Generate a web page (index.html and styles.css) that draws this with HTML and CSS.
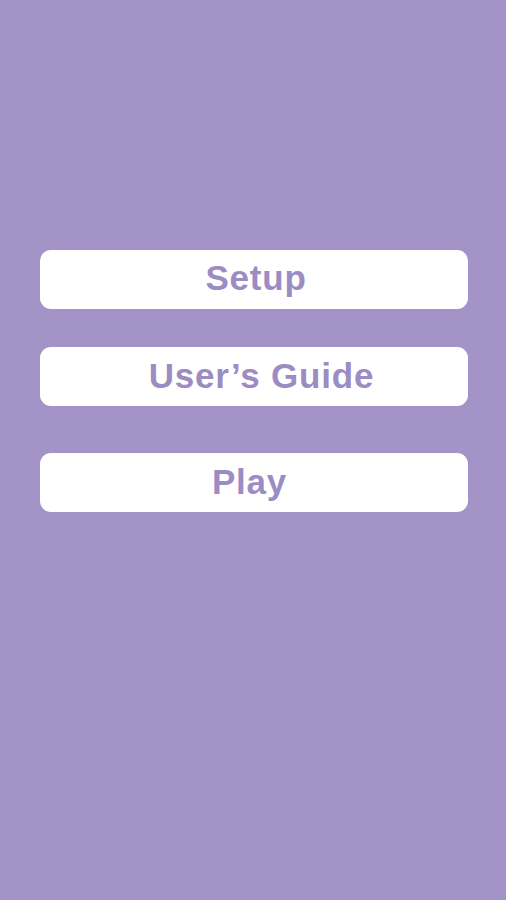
FILE: index.html
```html
<!DOCTYPE html>
<html lang="en">

<head>
    <meta charset="UTF-8">
    <meta name="viewport" content="width=device-width, initial-scale=1.0">
    <title>Menu</title>
    <link rel="stylesheet" href="styles.css">
</head>

<body>
    <div class="menu">
        <!-- Main menu buttons -->
        <button class="menu-btn menu-setup">Setup</button>
        <button class="menu-btn menu-guide">User’s Guide</button>
        <button class="menu-btn menu-play">Play</button>
    </div>
</body>

</html>
```

FILE: styles.css
```css
html,
body {
    margin: 0;
    height: 100%;
}

body {
    background: #a393c6;
    font-family: "Liberation Sans", Arial, sans-serif;
}

.menu {
    display: flex;
    flex-direction: column;
    padding-top: 250px;
    padding-left: 40px;
}

.menu-btn {
    width: 428px;
    height: 59px;
    border: none;
    border-radius: 11px;
    background: #ffffff;
    color: #9c8cc4;
    font-family: inherit;
    font-size: 35px;
    font-weight: bold;
    letter-spacing: 0.8px;
    padding: 0 0 2px 0;
    cursor: pointer;
}

.menu-setup {
    padding-left: 4px;
    padding-bottom: 3px;
}

.menu-guide {
    margin-top: 38px;
    padding-left: 15px;
}

.menu-play {
    margin-top: 47px;
    padding-right: 9px;
}
```
